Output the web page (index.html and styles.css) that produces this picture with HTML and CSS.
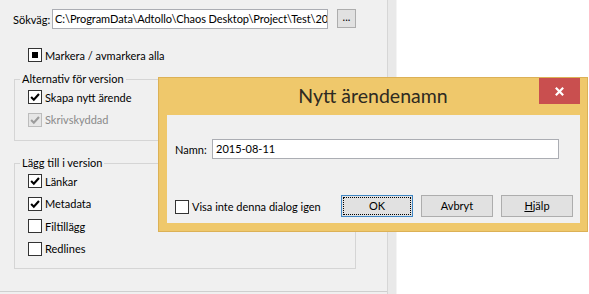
FILE: index.html
```html
<!DOCTYPE html>
<html lang="sv">
<head>
    <meta charset="UTF-8">
    <meta name="viewport" content="width=device-width, initial-scale=1.0">
    <title>Nytt ärendenamn</title>
    <link rel="stylesheet" href="styles.css">
</head>
<body>
    <div class="window">
        <div class="panel">
            <div class="path-row">
                <label class="path-label">Sökväg:</label>
                <div class="textbox path-input">C:\ProgramData\Adtollo\Chaos Desktop\Project\Test\20</div>
                <button class="browse">...</button>
            </div>

            <div class="check-row toggle-all">
                <span class="box"><span class="square"></span></span>Markera / avmarkera alla
            </div>

            <fieldset class="group group-options">
                <legend>Alternativ för version</legend>
                <div class="rows">
                    <div class="check-row">
                        <span class="box"><svg viewBox="0 0 13 13"><path d="M2.3 6.6 L5.2 9.4 L10.8 3.2"/></svg></span>Skapa nytt ärende
                    </div>
                    <div class="check-row disabled">
                        <span class="box"><svg viewBox="0 0 13 13"><path d="M2.3 6.6 L5.2 9.4 L10.8 3.2"/></svg></span>Skrivskyddad
                    </div>
                </div>
            </fieldset>

            <fieldset class="group group-add">
                <legend>Lägg till i version</legend>
                <div class="rows">
                    <div class="check-row">
                        <span class="box"><svg viewBox="0 0 13 13"><path d="M2.3 6.6 L5.2 9.4 L10.8 3.2"/></svg></span>Länkar
                    </div>
                    <div class="check-row">
                        <span class="box"><svg viewBox="0 0 13 13"><path d="M2.3 6.6 L5.2 9.4 L10.8 3.2"/></svg></span>Metadata
                    </div>
                    <div class="check-row">
                        <span class="box"></span>Filtillägg
                    </div>
                    <div class="check-row">
                        <span class="box"></span>Redlines
                    </div>
                </div>
            </fieldset>

            <div class="panel-foot"></div>
        </div>
        <div class="splitter"></div>
        <div class="content"></div>
    </div>

    <div class="dialog">
        <div class="dialog-title">
            Nytt ärendenamn
            <span class="close">
                <svg viewBox="0 0 12 12"><path d="M2 2 L10 10 M10 2 L2 10"/></svg>
            </span>
        </div>
        <div class="dialog-body">
            <div class="name-row">
                <label class="name-label">Namn:</label>
                <div class="textbox name-input">2015-08-11</div>
            </div>
            <div class="bottom-row">
                <div class="check-row">
                    <span class="box"></span>Visa inte denna dialog igen
                </div>
                <div class="buttons">
                    <button class="btn default"><span class="focus">OK</span></button>
                    <button class="btn">Avbryt</button>
                    <button class="btn"><u>H</u>jälp</button>
                </div>
            </div>
        </div>
    </div>
</body>
</html>
```

FILE: styles.css
```css
* {
    box-sizing: border-box;
}
body {
    margin: 0;
    font-family: Lato, "Noto Sans", sans-serif;
    font-size: 11px;
    color: #000;
    background: #fff;
    overflow: hidden;
}
.window {
    display: flex;
    height: 294px;
}
.panel {
    width: 387px;
    background: #f0f0f0;
    display: flex;
    flex-direction: column;
    padding-top: 9px;
}
.splitter {
    width: 10px;
    background: #e9e9e9;
    border-left: 1px solid #d6d6d6;
    border-right: 1px solid #f4f4f4;
}
.content {
    flex: 1;
    background: #fff;
}

/* sökväg */
.path-row {
    display: flex;
    align-items: center;
    height: 20px;
    margin-left: 13px;
}
.path-label {
    width: 39px;
    white-space: nowrap;
}
.textbox {
    height: 20px;
    background: #fff;
    border: 1px solid #abadb3;
    padding: 0 3px;
    line-height: 18px;
    white-space: nowrap;
    overflow: hidden;
}
.path-input {
    width: 276px;
    padding: 0 0 0 2px;
    letter-spacing: -0.06px;
}
.browse {
    margin-left: 9px;
    width: 19px;
    height: 19px;
    margin-top: -1px;
    padding: 0 0 4px;
    font: inherit;
    background: #e1e1e1;
    border: 1px solid #adadad;
    line-height: 12px;
}

/* checkboxes */
.check-row {
    display: flex;
    align-items: center;
    height: 22.5px;
    white-space: nowrap;
}
.box {
    width: 14px;
    height: 14px;
    border: 1px solid #333;
    background: #fff;
    margin-right: 3px;
    display: flex;
    align-items: center;
    justify-content: center;
    flex-shrink: 0;
}
.box svg {
    width: 12px;
    height: 12px;
}
.box path {
    fill: none;
    stroke: #000;
    stroke-width: 2.3;
}
.box .square {
    width: 6px;
    height: 6px;
    background: #000;
}
.check-row.disabled {
    color: #8a8a8a;
}
.check-row.disabled .box {
    border-color: #bcbcbc;
    background: #e6e6e6;
}
.check-row.disabled path {
    stroke: #9b9b9b;
}
.toggle-all {
    height: 22px;
    margin-top: 15px;
    padding-left: 28px;
}

/* grupper */
.group {
    margin: 5px 31px 0 14px;
    padding: 0 0 9px;
    border: 1px solid #d5d5d5;
}
.group legend {
    margin-left: 5px;
    padding: 0 2px;
    line-height: 16px;
}
.group .rows {
    margin-top: -1px;
    padding-left: 13px;
}
.group-add {
    margin-top: 14px;
    padding-bottom: 8px;
}
.panel-foot {
    margin-top: auto;
    height: 3px;
    border-top: 1px solid #cfcfcf;
}

/* dialog */
.dialog {
    position: absolute;
    left: 158px;
    top: 77px;
    width: 430px;
    height: 155px;
    background: #efc86b;
    border: 1px solid #dcb156;
    padding: 0 7px 8px 8px;
    display: flex;
    flex-direction: column;
}
.dialog-title {
    position: relative;
    height: 37px;
    line-height: 36px;
    text-align: center;
    font-size: 19.5px;
    color: #2e2a22;
    padding-right: 1px;
}
.close {
    position: absolute;
    top: 0;
    right: 0;
    width: 41px;
    height: 26px;
    background: #c94f4f;
    display: flex;
    align-items: center;
    justify-content: center;
}
.close svg {
    width: 11px;
    height: 11px;
}
.close path {
    stroke: #fff;
    stroke-width: 2.4;
}
.dialog-body {
    flex: 1;
    background: #f0f0f0;
    display: flex;
    flex-direction: column;
    justify-content: space-between;
    padding: 24px 7px 5px 8px;
}
.name-row {
    display: flex;
    align-items: center;
}
.name-label {
    width: 37px;
}
.name-input {
    width: 347px;
}
.bottom-row {
    display: flex;
    align-items: center;
    justify-content: space-between;
}
.bottom-row .check-row {
    margin-top: 2px;
}
.buttons {
    display: flex;
    gap: 8px;
}
.btn {
    width: 72px;
    height: 22px;
    padding: 0;
    font: inherit;
    color: #000;
    background: #e1e1e1;
    border: 1px solid #adadad;
}
.btn.default {
    border-color: #3f86c4;
    padding: 1px;
}
.btn .focus {
    display: flex;
    align-items: center;
    justify-content: center;
    height: 100%;
    border: 1px dotted #000;
}
```
